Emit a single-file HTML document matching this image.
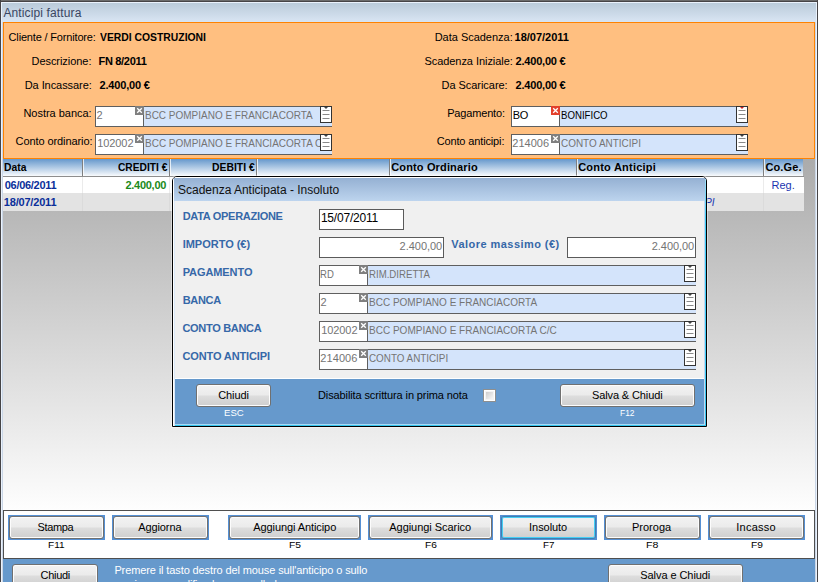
<!DOCTYPE html>
<html lang="it"><head><meta charset="utf-8"><title>Anticipi fattura</title>
<style>
html,body{margin:0;padding:0}
body{width:818px;height:582px;overflow:hidden;position:relative;background:#fff;font-family:"Liberation Sans", sans-serif;}
#w{position:absolute;left:0;top:0;width:818px;height:582px;overflow:hidden}
#w div,#w svg.a{position:absolute}
.t{position:absolute;white-space:pre;line-height:16px;font-family:"Liberation Sans", sans-serif;}
</style></head><body><div id="w">
<div style="left:0px;top:0px;width:818px;height:582px;background:#464446;"></div>
<div style="left:1px;top:0px;width:816px;height:1px;background:#6b6b6b;"></div>
<div style="left:1px;top:2px;width:816px;height:580px;background:#eaf2fc;"></div>
<div style="left:2px;top:3px;width:814px;height:579px;background:#cad6e6;"></div>
<div style="left:2px;top:3px;width:814px;height:19px;background:linear-gradient(#bacbda,#d9e5f3);"></div>
<div style="left:3px;top:22px;width:812px;height:137px;background:#ffbf80;border:1px solid #ff8200;box-sizing:border-box;"></div>
<div style="left:3px;top:159px;width:812px;height:351px;background:linear-gradient(#ababab,#fefefe);"></div>
<div style="left:3px;top:159px;width:800px;height:17px;background:linear-gradient(#6698cc,#f9fbfd);"></div>
<div style="left:3px;top:176px;width:801px;height:1px;background:#8e8e8e;"></div>
<div style="left:82px;top:159px;width:1px;height:17px;background:#7f7f7f;"></div>
<div style="left:83px;top:159px;width:1px;height:17px;background:rgba(255,255,255,.75);"></div>
<div style="left:169px;top:159px;width:1px;height:17px;background:#7f7f7f;"></div>
<div style="left:170px;top:159px;width:1px;height:17px;background:rgba(255,255,255,.75);"></div>
<div style="left:256px;top:159px;width:1px;height:17px;background:#7f7f7f;"></div>
<div style="left:257px;top:159px;width:1px;height:17px;background:rgba(255,255,255,.75);"></div>
<div style="left:389px;top:159px;width:1px;height:17px;background:#7f7f7f;"></div>
<div style="left:390px;top:159px;width:1px;height:17px;background:rgba(255,255,255,.75);"></div>
<div style="left:576px;top:159px;width:1px;height:17px;background:#7f7f7f;"></div>
<div style="left:577px;top:159px;width:1px;height:17px;background:rgba(255,255,255,.75);"></div>
<div style="left:763px;top:159px;width:1px;height:17px;background:#7f7f7f;"></div>
<div style="left:764px;top:159px;width:1px;height:17px;background:rgba(255,255,255,.75);"></div>
<div style="left:3px;top:177px;width:801px;height:16px;background:#fff;"></div>
<div style="left:3px;top:193px;width:801px;height:18px;background:#e3e3e3;"></div>
<div style="left:82px;top:177px;width:1px;height:16px;background:#ebebeb;"></div>
<div style="left:82px;top:193px;width:1px;height:18px;background:#dbdbdb;"></div>
<div style="left:169px;top:177px;width:1px;height:16px;background:#ebebeb;"></div>
<div style="left:169px;top:193px;width:1px;height:18px;background:#dbdbdb;"></div>
<div style="left:256px;top:177px;width:1px;height:16px;background:#ebebeb;"></div>
<div style="left:256px;top:193px;width:1px;height:18px;background:#dbdbdb;"></div>
<div style="left:389px;top:177px;width:1px;height:16px;background:#ebebeb;"></div>
<div style="left:389px;top:193px;width:1px;height:18px;background:#dbdbdb;"></div>
<div style="left:576px;top:177px;width:1px;height:16px;background:#ebebeb;"></div>
<div style="left:576px;top:193px;width:1px;height:18px;background:#dbdbdb;"></div>
<div style="left:763px;top:177px;width:1px;height:16px;background:#ebebeb;"></div>
<div style="left:763px;top:193px;width:1px;height:18px;background:#dbdbdb;"></div>
<div style="left:95px;top:106px;width:237px;height:21px;background:#d4e4fb;border-top:1px solid #5f5f5f;border-bottom:1px solid #5f5f5f;box-sizing:border-box;"></div>
<div style="left:95px;top:106px;width:49px;height:21px;background:#fff;border:1px solid #5f5f5f;box-sizing:border-box;"></div>
<svg class="a" style="left:135px;top:106px" width="9" height="9" viewBox="0 0 9 9"><rect width="9" height="9" fill="#7f7f7f"/><path d="M2.2 2.2L6.8 6.8M6.8 2.2L2.2 6.8" stroke="#fff" stroke-width="1.3"/></svg>
<svg class="a" style="left:320px;top:106px" width="12" height="17" viewBox="0 0 12 17"><rect x="0.5" y="0.5" width="11" height="16" fill="#fff" stroke="#333"/><path d="M2.5 4.5H9.5M2.5 8.5H9.5M2.5 12.5H9.5" stroke="#8a8a8a" stroke-width="1"/><path d="M4 1H8L6 3Z" fill="#444"/></svg>
<div style="left:95px;top:134px;width:237px;height:21px;background:#d4e4fb;border-top:1px solid #5f5f5f;border-bottom:1px solid #5f5f5f;box-sizing:border-box;"></div>
<div style="left:95px;top:134px;width:49px;height:21px;background:#fff;border:1px solid #5f5f5f;box-sizing:border-box;"></div>
<svg class="a" style="left:135px;top:134px" width="9" height="9" viewBox="0 0 9 9"><rect width="9" height="9" fill="#7f7f7f"/><path d="M2.2 2.2L6.8 6.8M6.8 2.2L2.2 6.8" stroke="#fff" stroke-width="1.3"/></svg>
<svg class="a" style="left:320px;top:134px" width="12" height="17" viewBox="0 0 12 17"><rect x="0.5" y="0.5" width="11" height="16" fill="#fff" stroke="#333"/><path d="M2.5 4.5H9.5M2.5 8.5H9.5M2.5 12.5H9.5" stroke="#8a8a8a" stroke-width="1"/><path d="M4 1H8L6 3Z" fill="#444"/></svg>
<div style="left:511px;top:106px;width:237px;height:21px;background:#d4e4fb;border-top:1px solid #5f5f5f;border-bottom:1px solid #5f5f5f;box-sizing:border-box;"></div>
<div style="left:511px;top:106px;width:49px;height:21px;background:#fff;border:1px solid #5f5f5f;box-sizing:border-box;"></div>
<svg class="a" style="left:551px;top:106px" width="9" height="9" viewBox="0 0 9 9"><rect width="9" height="9" fill="#e2402c"/><path d="M2.2 2.2L6.8 6.8M6.8 2.2L2.2 6.8" stroke="#fff" stroke-width="1.3"/></svg>
<svg class="a" style="left:736px;top:106px" width="12" height="17" viewBox="0 0 12 17"><rect x="0.5" y="0.5" width="11" height="16" fill="#fff" stroke="#333"/><path d="M2.5 4.5H9.5M2.5 8.5H9.5M2.5 12.5H9.5" stroke="#8a8a8a" stroke-width="1"/><path d="M4 1H8L6 3Z" fill="#d02020"/></svg>
<div style="left:511px;top:134px;width:237px;height:21px;background:#d4e4fb;border-top:1px solid #5f5f5f;border-bottom:1px solid #5f5f5f;box-sizing:border-box;"></div>
<div style="left:511px;top:134px;width:49px;height:21px;background:#fff;border:1px solid #5f5f5f;box-sizing:border-box;"></div>
<svg class="a" style="left:551px;top:134px" width="9" height="9" viewBox="0 0 9 9"><rect width="9" height="9" fill="#7f7f7f"/><path d="M2.2 2.2L6.8 6.8M6.8 2.2L2.2 6.8" stroke="#fff" stroke-width="1.3"/></svg>
<svg class="a" style="left:736px;top:134px" width="12" height="17" viewBox="0 0 12 17"><rect x="0.5" y="0.5" width="11" height="16" fill="#fff" stroke="#333"/><path d="M2.5 4.5H9.5M2.5 8.5H9.5M2.5 12.5H9.5" stroke="#8a8a8a" stroke-width="1"/><path d="M4 1H8L6 3Z" fill="#444"/></svg>
<div style="left:3px;top:510px;width:812px;height:49px;background:#fff;border:1px solid #4f4f4f;box-sizing:border-box;"></div>
<div style="left:8px;top:515px;width:97px;height:25px;background:#5590d4;"></div>
<div style="left:9px;top:516px;width:95px;height:23px;box-sizing:border-box;border:1px solid #707070;border-radius:3px;background:linear-gradient(#f2f2f2 0%,#ebebeb 48%,#dddddd 52%,#cfcfcf 100%);box-shadow:inset 0 0 0 1px #fcfcfc;"></div>
<div style="left:112px;top:515px;width:97px;height:25px;background:#5590d4;"></div>
<div style="left:113px;top:516px;width:95px;height:23px;box-sizing:border-box;border:1px solid #707070;border-radius:3px;background:linear-gradient(#f2f2f2 0%,#ebebeb 48%,#dddddd 52%,#cfcfcf 100%);box-shadow:inset 0 0 0 1px #fcfcfc;"></div>
<div style="left:228px;top:515px;width:133px;height:25px;background:#5590d4;"></div>
<div style="left:229px;top:516px;width:131px;height:23px;box-sizing:border-box;border:1px solid #707070;border-radius:3px;background:linear-gradient(#f2f2f2 0%,#ebebeb 48%,#dddddd 52%,#cfcfcf 100%);box-shadow:inset 0 0 0 1px #fcfcfc;"></div>
<div style="left:368px;top:515px;width:125px;height:25px;background:#5590d4;"></div>
<div style="left:369px;top:516px;width:123px;height:23px;box-sizing:border-box;border:1px solid #707070;border-radius:3px;background:linear-gradient(#f2f2f2 0%,#ebebeb 48%,#dddddd 52%,#cfcfcf 100%);box-shadow:inset 0 0 0 1px #fcfcfc;"></div>
<div style="left:500px;top:515px;width:97px;height:25px;background:#5590d4;"></div>
<div style="left:501px;top:516px;width:95px;height:23px;box-sizing:border-box;border:1px solid #3c7fb1;border-radius:3px;background:linear-gradient(#f2f2f2 0%,#ebebeb 48%,#dddddd 52%,#cfcfcf 100%);box-shadow:inset 0 0 0 1px #45cdf5;"></div>
<div style="left:604px;top:515px;width:97px;height:25px;background:#5590d4;"></div>
<div style="left:605px;top:516px;width:95px;height:23px;box-sizing:border-box;border:1px solid #707070;border-radius:3px;background:linear-gradient(#f2f2f2 0%,#ebebeb 48%,#dddddd 52%,#cfcfcf 100%);box-shadow:inset 0 0 0 1px #fcfcfc;"></div>
<div style="left:708px;top:515px;width:97px;height:25px;background:#5590d4;"></div>
<div style="left:709px;top:516px;width:95px;height:23px;box-sizing:border-box;border:1px solid #707070;border-radius:3px;background:linear-gradient(#f2f2f2 0%,#ebebeb 48%,#dddddd 52%,#cfcfcf 100%);box-shadow:inset 0 0 0 1px #fcfcfc;"></div>
<div style="left:3px;top:559px;width:812px;height:23px;background:#6699cc;"></div>
<div style="left:12px;top:564px;width:86px;height:23px;box-sizing:border-box;border:1px solid #707070;border-radius:3px;background:linear-gradient(#f2f2f2 0%,#ebebeb 48%,#dddddd 52%,#cfcfcf 100%);box-shadow:inset 0 0 0 1px #fcfcfc;"></div>
<div style="left:608px;top:564px;width:135px;height:23px;box-sizing:border-box;border:1px solid #707070;border-radius:3px;background:linear-gradient(#f2f2f2 0%,#ebebeb 48%,#dddddd 52%,#cfcfcf 100%);box-shadow:inset 0 0 0 1px #fcfcfc;"></div>
<span class="t" style="left:3.4px;top:5px;font-size:12px;color:#3a4662;letter-spacing:0.13px;">Anticipi fattura</span>
<span class="t" style="left:8.6px;top:29px;font-size:11px;color:#000;letter-spacing:-0.17px;">Cliente / Fornitore:</span>
<span class="t" style="left:31.5px;top:53px;font-size:11px;color:#000;letter-spacing:-0.05px;">Descrizione:</span>
<span class="t" style="left:24.7px;top:77px;font-size:11px;color:#000;letter-spacing:-0.06px;">Da Incassare:</span>
<span class="t" style="left:23.4px;top:105px;font-size:11px;color:#000;letter-spacing:-0.02px;">Nostra banca:</span>
<span class="t" style="left:15.6px;top:133px;font-size:11px;color:#000;letter-spacing:-0.09px;">Conto ordinario:</span>
<span class="t" style="left:99.5px;top:29px;font-size:11px;color:#000;font-weight:bold;transform:scale(0.9420,1.0000);transform-origin:0 12px;">VERDI COSTRUZIONI</span>
<span class="t" style="left:98.5px;top:53px;font-size:11px;color:#000;font-weight:bold;letter-spacing:-0.31px;">FN 8/2011</span>
<span class="t" style="left:99.5px;top:77px;font-size:11px;color:#000;font-weight:bold;letter-spacing:-0.17px;">2.400,00 €</span>
<span class="t" style="left:434.7px;top:29px;font-size:11px;color:#000;letter-spacing:-0.02px;">Data Scadenza:</span>
<span class="t" style="left:424.4px;top:53px;font-size:11px;color:#000;letter-spacing:-0.05px;">Scadenza Iniziale:</span>
<span class="t" style="left:441.5px;top:77px;font-size:11px;color:#000;letter-spacing:-0.04px;">Da Scaricare:</span>
<span class="t" style="left:447.2px;top:105px;font-size:11px;color:#000;letter-spacing:-0.17px;">Pagamento:</span>
<span class="t" style="left:436.7px;top:133px;font-size:11px;color:#000;letter-spacing:-0.14px;">Conto anticipi:</span>
<span class="t" style="left:514.6px;top:29px;font-size:11px;color:#000;font-weight:bold;letter-spacing:-0.02px;">18/07/2011</span>
<span class="t" style="left:515.6px;top:53px;font-size:11px;color:#000;font-weight:bold;letter-spacing:-0.21px;">2.400,00 €</span>
<span class="t" style="left:515.6px;top:77px;font-size:11px;color:#000;font-weight:bold;letter-spacing:-0.21px;">2.400,00 €</span>
<span class="t" style="left:96.5px;top:107px;font-size:11px;color:#747474;">2</span>
<span class="t" style="left:97.3px;top:135px;font-size:11px;color:#747474;letter-spacing:-0.10px;">102002</span>
<span class="t" style="left:145.1px;top:107px;font-size:11px;color:#747474;transform:scale(0.9076,1.0000);transform-origin:0 12px;">BCC POMPIANO E FRANCIACORTA</span>
<div style="left:144px;top:135px;width:176px;height:16px;overflow:hidden"><span class="t" style="left:1.1px;top:0;font-size:11px;color:#747474;transform:scale(0.9083,1.0000);transform-origin:0 12px;">BCC POMPIANO E FRANCIACORTA C/C</span></div>
<span class="t" style="left:512.7px;top:107px;font-size:11px;color:#000;letter-spacing:-0.30px;">BO</span>
<span class="t" style="left:560.7px;top:107px;font-size:11px;color:#000;transform:scale(0.8769,1.0000);transform-origin:0 12px;">BONIFICO</span>
<span class="t" style="left:512.3px;top:135px;font-size:11px;color:#747474;">214006</span>
<span class="t" style="left:560.7px;top:135px;font-size:11px;color:#747474;transform:scale(0.9035,1.0000);transform-origin:0 12px;">CONTO ANTICIPI</span>
<span class="t" style="left:3.9px;top:159px;font-size:11px;color:#000;font-weight:bold;transform:scale(0.9391,1.0000);transform-origin:0 12px;">Data</span>
<span class="t" style="left:117.6px;top:159px;font-size:11px;color:#000;font-weight:bold;transform:scale(0.9283,1.0000);transform-origin:0 12px;">CREDITI €</span>
<span class="t" style="left:211.6px;top:159px;font-size:11px;color:#000;font-weight:bold;transform:scale(0.9432,1.0000);transform-origin:0 12px;">DEBITI €</span>
<span class="t" style="left:391.2px;top:159px;font-size:11px;color:#000;font-weight:bold;letter-spacing:0.15px;">Conto Ordinario</span>
<span class="t" style="left:578.2px;top:159px;font-size:11px;color:#000;font-weight:bold;letter-spacing:0.22px;">Conto Anticipi</span>
<span class="t" style="left:765.4px;top:159px;font-size:11px;color:#000;font-weight:bold;letter-spacing:0.12px;">Co.Ge.</span>
<span class="t" style="left:4.8px;top:177px;font-size:11px;color:#0a2f9a;font-weight:bold;letter-spacing:-0.30px;">06/06/2011</span>
<span class="t" style="left:125.4px;top:177px;font-size:11px;color:#1a8a1a;font-weight:bold;letter-spacing:-0.26px;">2.400,00</span>
<span class="t" style="left:771.5px;top:177px;font-size:11px;color:#1a35b0;">Reg.</span>
<span class="t" style="left:3.8px;top:194px;font-size:11px;color:#0a2f9a;font-weight:bold;letter-spacing:-0.19px;">18/07/2011</span>
<span class="t" style="left:633.1px;top:194px;font-size:11px;color:#1a35b0;font-style:italic;transform:scale(0.9218,1.0000);transform-origin:0 12px;">CONTO ANTICIPI</span>
<span class="t" style="left:37.5px;top:519px;font-size:11px;color:#000;letter-spacing:-0.34px;">Stampa</span>
<span class="t" style="left:138.2px;top:519px;font-size:11px;color:#000;letter-spacing:-0.09px;">Aggiorna</span>
<span class="t" style="left:253.3px;top:519px;font-size:11px;color:#000;letter-spacing:-0.09px;">Aggiungi Anticipo</span>
<span class="t" style="left:389.3px;top:519px;font-size:11px;color:#000;letter-spacing:-0.05px;">Aggiungi Scarico</span>
<span class="t" style="left:529.1px;top:519px;font-size:11px;color:#000;letter-spacing:-0.06px;">Insoluto</span>
<span class="t" style="left:632.0px;top:519px;font-size:11px;color:#000;">Proroga</span>
<span class="t" style="left:736.2px;top:519px;font-size:11px;color:#000;letter-spacing:0.27px;">Incasso</span>
<span class="t" style="left:47.5px;top:537px;font-size:10px;color:#000;transform:scale(1.0067,0.8750);transform-origin:0 11px;">F11</span>
<span class="t" style="left:288.5px;top:537px;font-size:10px;color:#000;transform:scale(1.0300,0.8750);transform-origin:0 11px;">F5</span>
<span class="t" style="left:424.5px;top:537px;font-size:10px;color:#000;transform:scale(1.0200,0.8750);transform-origin:0 11px;">F6</span>
<span class="t" style="left:542.8px;top:537px;font-size:10px;color:#000;transform:scale(0.9800,0.8750);transform-origin:0 11px;">F7</span>
<span class="t" style="left:646.2px;top:537px;font-size:10px;color:#000;transform:scale(1.0600,0.8750);transform-origin:0 11px;">F8</span>
<span class="t" style="left:750.5px;top:537px;font-size:10px;color:#000;transform:scale(1.0200,0.8750);transform-origin:0 11px;">F9</span>
<span class="t" style="left:40.5px;top:567px;font-size:11px;color:#000;letter-spacing:-0.28px;">Chiudi</span>
<span class="t" style="left:114.4px;top:562px;font-size:11px;color:#fff;letter-spacing:-0.11px;">Premere il tasto destro del mouse sull'anticipo o sullo</span>
<span class="t" style="left:114.4px;top:576px;font-size:11px;color:#fff;letter-spacing:-0.18px;">scarico per modificarlo o cancellarlo</span>
<span class="t" style="left:640.3px;top:567px;font-size:11px;color:#000;letter-spacing:-0.07px;">Salva e Chiudi</span>
<div style="left:172px;top:176px;width:535px;height:251px;background:#f0f0f0;border:1px solid #000;border-radius:5px 5px 0 0;box-sizing:border-box;overflow:hidden;box-shadow:0 0 0 1px rgba(255,255,255,.45);"><div style="left:0;top:0;width:533px;height:24px;background:linear-gradient(#fff 0,#fff 1px,#95b1d3 1px,#bdd4ee 24px)"></div><div style="left:0;top:201px;width:533px;height:1px;background:#fff"></div><div style="left:0;top:202px;width:533px;height:47px;background:#6699cc"></div><div style="left:0;top:247px;width:533px;height:1px;background:#a8d8f4"></div><div style="left:0;top:248px;width:533px;height:1px;background:#35c6f0"></div><div style="left:0;top:0;width:1px;height:249px;background:#fff"></div><div style="left:1px;top:24px;width:1px;height:225px;background:#dbe9f8"></div><div style="left:531px;top:24px;width:1px;height:224px;background:#c4d6ee"></div><div style="left:532px;top:2px;width:1px;height:247px;background:linear-gradient(#9fe0fa,#3ccaf4 40px)"></div></div>
<div style="left:319px;top:209px;width:85px;height:21px;background:#fff;border:1px solid #5a5a5a;box-sizing:border-box;"></div>
<div style="left:319px;top:237px;width:125px;height:21px;background:#fff;border:1px solid #5a5a5a;box-sizing:border-box;"></div>
<div style="left:567px;top:237px;width:129px;height:21px;background:#fff;border:1px solid #5a5a5a;box-sizing:border-box;"></div>
<div style="left:319px;top:265px;width:377px;height:21px;background:#d4e4fb;border-top:1px solid #5f5f5f;border-bottom:1px solid #5f5f5f;box-sizing:border-box;"></div>
<div style="left:319px;top:265px;width:49px;height:21px;background:#fff;border:1px solid #5f5f5f;box-sizing:border-box;"></div>
<svg class="a" style="left:359px;top:265px" width="9" height="9" viewBox="0 0 9 9"><rect width="9" height="9" fill="#7f7f7f"/><path d="M2.2 2.2L6.8 6.8M6.8 2.2L2.2 6.8" stroke="#fff" stroke-width="1.3"/></svg>
<svg class="a" style="left:684px;top:265px" width="12" height="17" viewBox="0 0 12 17"><rect x="0.5" y="0.5" width="11" height="16" fill="#fff" stroke="#333"/><path d="M2.5 4.5H9.5M2.5 8.5H9.5M2.5 12.5H9.5" stroke="#8a8a8a" stroke-width="1"/><path d="M4 1H8L6 3Z" fill="#444"/></svg>
<div style="left:319px;top:293px;width:377px;height:21px;background:#d4e4fb;border-top:1px solid #5f5f5f;border-bottom:1px solid #5f5f5f;box-sizing:border-box;"></div>
<div style="left:319px;top:293px;width:49px;height:21px;background:#fff;border:1px solid #5f5f5f;box-sizing:border-box;"></div>
<svg class="a" style="left:359px;top:293px" width="9" height="9" viewBox="0 0 9 9"><rect width="9" height="9" fill="#7f7f7f"/><path d="M2.2 2.2L6.8 6.8M6.8 2.2L2.2 6.8" stroke="#fff" stroke-width="1.3"/></svg>
<svg class="a" style="left:684px;top:293px" width="12" height="17" viewBox="0 0 12 17"><rect x="0.5" y="0.5" width="11" height="16" fill="#fff" stroke="#333"/><path d="M2.5 4.5H9.5M2.5 8.5H9.5M2.5 12.5H9.5" stroke="#8a8a8a" stroke-width="1"/><path d="M4 1H8L6 3Z" fill="#444"/></svg>
<div style="left:319px;top:321px;width:377px;height:21px;background:#d4e4fb;border-top:1px solid #5f5f5f;border-bottom:1px solid #5f5f5f;box-sizing:border-box;"></div>
<div style="left:319px;top:321px;width:49px;height:21px;background:#fff;border:1px solid #5f5f5f;box-sizing:border-box;"></div>
<svg class="a" style="left:359px;top:321px" width="9" height="9" viewBox="0 0 9 9"><rect width="9" height="9" fill="#7f7f7f"/><path d="M2.2 2.2L6.8 6.8M6.8 2.2L2.2 6.8" stroke="#fff" stroke-width="1.3"/></svg>
<svg class="a" style="left:684px;top:321px" width="12" height="17" viewBox="0 0 12 17"><rect x="0.5" y="0.5" width="11" height="16" fill="#fff" stroke="#333"/><path d="M2.5 4.5H9.5M2.5 8.5H9.5M2.5 12.5H9.5" stroke="#8a8a8a" stroke-width="1"/><path d="M4 1H8L6 3Z" fill="#444"/></svg>
<div style="left:319px;top:349px;width:377px;height:21px;background:#d4e4fb;border-top:1px solid #5f5f5f;border-bottom:1px solid #5f5f5f;box-sizing:border-box;"></div>
<div style="left:319px;top:349px;width:49px;height:21px;background:#fff;border:1px solid #5f5f5f;box-sizing:border-box;"></div>
<svg class="a" style="left:359px;top:349px" width="9" height="9" viewBox="0 0 9 9"><rect width="9" height="9" fill="#7f7f7f"/><path d="M2.2 2.2L6.8 6.8M6.8 2.2L2.2 6.8" stroke="#fff" stroke-width="1.3"/></svg>
<svg class="a" style="left:684px;top:349px" width="12" height="17" viewBox="0 0 12 17"><rect x="0.5" y="0.5" width="11" height="16" fill="#fff" stroke="#333"/><path d="M2.5 4.5H9.5M2.5 8.5H9.5M2.5 12.5H9.5" stroke="#8a8a8a" stroke-width="1"/><path d="M4 1H8L6 3Z" fill="#444"/></svg>
<div style="left:196px;top:384px;width:75px;height:23px;box-sizing:border-box;border:1px solid #707070;border-radius:3px;background:linear-gradient(#f2f2f2 0%,#ebebeb 48%,#dddddd 52%,#cfcfcf 100%);box-shadow:inset 0 0 0 1px #fcfcfc;"></div>
<div style="left:560px;top:384px;width:135px;height:23px;box-sizing:border-box;border:1px solid #707070;border-radius:3px;background:linear-gradient(#f2f2f2 0%,#ebebeb 48%,#dddddd 52%,#cfcfcf 100%);box-shadow:inset 0 0 0 1px #fcfcfc;"></div>
<div style="left:483px;top:389px;width:13px;height:13px;box-sizing:border-box;border:1px solid #8e8f8f;background:#fff;"><div style="left:1px;top:1px;width:9px;height:9px;box-sizing:border-box;border:1px solid #f4f4f4;background:linear-gradient(135deg,#cdcdcd,#f7f7f7)"></div></div>
<span class="t" style="left:178.0px;top:182px;font-size:12px;color:#111;letter-spacing:-0.01px;">Scadenza Anticipata - Insoluto</span>
<span class="t" style="left:182.7px;top:208px;font-size:11px;color:#3668a8;font-weight:bold;letter-spacing:-0.29px;">DATA OPERAZIONE</span>
<span class="t" style="left:182.7px;top:236px;font-size:11px;color:#3668a8;font-weight:bold;letter-spacing:-0.02px;">IMPORTO (€)</span>
<span class="t" style="left:182.7px;top:264px;font-size:11px;color:#3668a8;font-weight:bold;letter-spacing:-0.09px;">PAGAMENTO</span>
<span class="t" style="left:182.7px;top:292px;font-size:11px;color:#3668a8;font-weight:bold;letter-spacing:-0.30px;">BANCA</span>
<span class="t" style="left:182.4px;top:320px;font-size:11px;color:#3668a8;font-weight:bold;letter-spacing:-0.30px;">CONTO BANCA</span>
<span class="t" style="left:182.4px;top:348px;font-size:11px;color:#3668a8;font-weight:bold;letter-spacing:-0.12px;">CONTO ANTICIPI</span>
<span class="t" style="left:451.3px;top:236px;font-size:11px;color:#3668a8;font-weight:bold;letter-spacing:0.45px;">Valore massimo (€)</span>
<span class="t" style="left:320.9px;top:210px;font-size:12px;color:#000;letter-spacing:-0.20px;">15/07/2011</span>
<span class="t" style="left:399.6px;top:238px;font-size:11px;color:#747474;letter-spacing:-0.03px;">2.400,00</span>
<span class="t" style="left:651.8px;top:238px;font-size:11px;color:#747474;letter-spacing:-0.07px;">2.400,00</span>
<span class="t" style="left:320.4px;top:266px;font-size:11px;color:#747474;transform:scale(0.8667,1.0000);transform-origin:0 12px;">RD</span>
<span class="t" style="left:369.1px;top:266px;font-size:11px;color:#747474;transform:scale(0.8765,1.0000);transform-origin:0 12px;">RIM.DIRETTA</span>
<span class="t" style="left:320.5px;top:294px;font-size:11px;color:#747474;">2</span>
<span class="t" style="left:369.1px;top:294px;font-size:11px;color:#747474;transform:scale(0.9098,1.0000);transform-origin:0 12px;">BCC POMPIANO E FRANCIACORTA</span>
<span class="t" style="left:321.3px;top:322px;font-size:11px;color:#747474;letter-spacing:-0.10px;">102002</span>
<span class="t" style="left:369.1px;top:322px;font-size:11px;color:#747474;transform:scale(0.9102,1.0000);transform-origin:0 12px;">BCC POMPIANO E FRANCIACORTA C/C</span>
<span class="t" style="left:320.3px;top:350px;font-size:11px;color:#747474;letter-spacing:0.08px;">214006</span>
<span class="t" style="left:369.1px;top:350px;font-size:11px;color:#747474;transform:scale(0.8953,1.0000);transform-origin:0 12px;">CONTO ANTICIPI</span>
<span class="t" style="left:218.2px;top:387px;font-size:11px;color:#000;letter-spacing:-0.10px;">Chiudi</span>
<span class="t" style="left:223.8px;top:405px;font-size:10px;color:#fff;transform:scale(0.9579,0.8750);transform-origin:0 11px;">ESC</span>
<span class="t" style="left:318.0px;top:387px;font-size:11px;color:#000;letter-spacing:-0.11px;">Disabilita scrittura in prima nota</span>
<span class="t" style="left:592.0px;top:387px;font-size:11px;color:#000;letter-spacing:-0.12px;">Salva &amp; Chiudi</span>
<span class="t" style="left:620.0px;top:405px;font-size:10px;color:#fff;transform:scale(0.8400,0.8750);transform-origin:0 11px;">F12</span>
</div></body></html>
